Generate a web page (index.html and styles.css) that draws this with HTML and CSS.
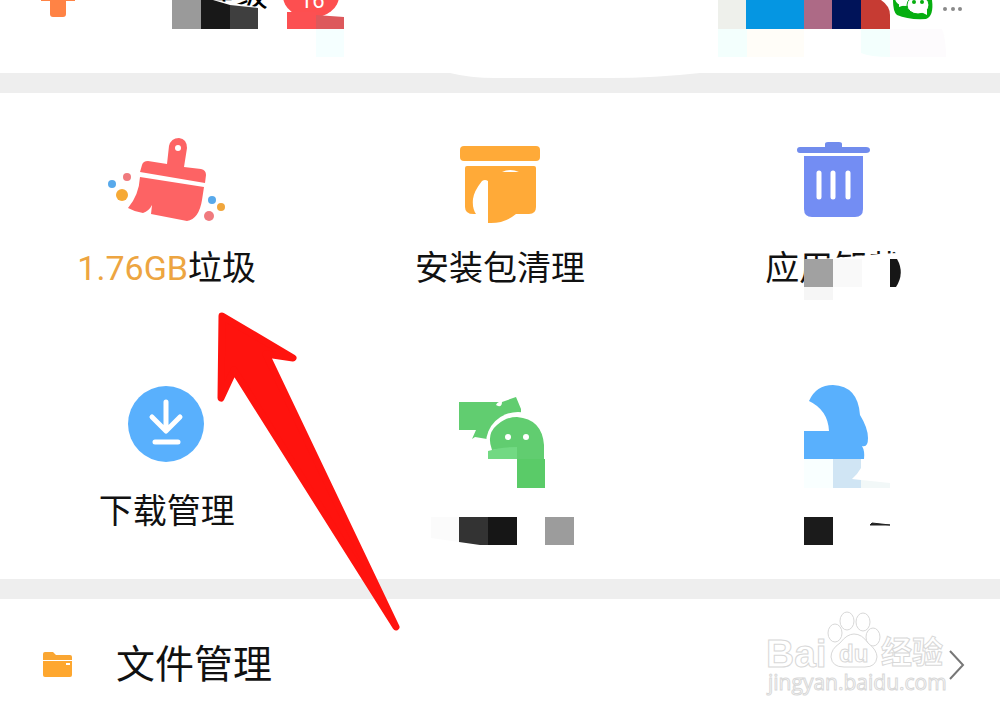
FILE: index.html
```html
<!DOCTYPE html>
<html lang="zh-CN">
<head>
    <meta charset="UTF-8">
    <meta name="viewport" content="width=device-width, initial-scale=1.0">
    <title>文件管理</title>
    <link rel="stylesheet" href="styles.css">
</head>
<body>

    <header class="topo">
        <button class="add" aria-label="添加">
            <svg width="34" height="18" viewBox="0 0 34 18">
                <path d="M0 0h34v1H25v13q0 3-3 3H12q-3 0-3-3V1H0z" fill="#ff8345"/>
            </svg>
        </button>
        <svg class="user" width="100" height="30" viewBox="0 0 100 30">
            <text x="28" y="6" font-size="34">等级</text>
            <path d="M0 0h42L86 7V29H0z" fill="#fff"/>
            <path d="M0 0h29v29H0z" fill="#9a9a9a"/>
            <path d="M29 0h12l17 5v24H29z" fill="#181818"/>
            <path d="M58 5l28 3v21H58z" fill="#3f3f3f"/>
        </svg>
        <svg class="badge" width="64" height="60" viewBox="0 0 64 60">
            <ellipse cx="29" cy="-4" rx="28" ry="22" fill="#fd4f50"/>
            <path d="M5 12h29v17H5z" fill="#fc5052"/>
            <path d="M34 15l28 2v12H34z" fill="#dd595c"/>
            <path d="M34 29h28v28H34z" fill="#f5ffff"/>
            <text x="18" y="8" font-size="22">16</text>
        </svg>

        <svg class="promo" width="229" height="58" viewBox="0 0 229 58">
            <path d="M0 0h29v29H0z" fill="#eef0eb"/>
            <path d="M28 0h58v29H28z" fill="#0596e2"/>
            <path d="M86 0h29v29H86z" fill="#ad6a86"/>
            <path d="M114 0h30v29h-30z" fill="#001359"/>
            <path d="M143 0h20q9 6 9 15v14h-29z" fill="#c63b33"/>
            <path d="M0 29h29v28H0z" fill="#f3fffd"/>
            <path d="M29 29h57v28H29z" fill="#fffdf8"/>
            <path d="M143 29h29v28q-20 0-29-4z" fill="#f3fffd"/>
            <path d="M172 29h52q4 10 4 28h-56z" fill="#fdfbfd"/>
            <path d="M175 0h39q2 16-6 19-18 1-29-4-4-3-4-15z" fill="#06ae10"/>
            <ellipse cx="187" cy="-2" rx="10" ry="8" fill="#fff"/>
            <path d="M181 3v4l6-2z" fill="#fff"/>
            <ellipse cx="200" cy="5" rx="11" ry="9" fill="#fff" stroke="#06ae10"/>
            <path d="M203 12l6 3v-6z" fill="#fff"/>
            <circle cx="196" cy="2" r="2" fill="#06ae10"/>
            <circle cx="204" cy="2" r="2" fill="#06ae10"/>
        </svg>
        <button class="more" aria-label="更多">
            <svg width="20" height="18" viewBox="0 0 20 18" fill="#8a8a8a">
                <circle cx="2" cy="9" r="2"/>
                <circle cx="10" cy="9" r="2"/>
                <circle cx="17" cy="9" r="2"/>
            </svg>
        </button>
    </header>

    <div class="faixa">
        <svg class="curva" width="250" height="5" viewBox="0 0 250 5">
            <path d="M0 0Q20 5 45 5H160Q205 5 250 0z" fill="#fff"/>
        </svg>
    </div>

    <main class="grade">
        <a class="item" href="#">
            <svg width="140" height="120" viewBox="0 0 140 120">
                <g fill="#fd6364">
                    <path d="M70 39l2-18q2-8 10-8 8 1 8 10l-3 19 17 2q5 1 5 6l-1 8-65-11 2-7q1-4 6-4z"/>
                    <path d="M43 52l64 10-2 13q-3 19-15 21l-36-7 1-9q-3 6-9 8-8-1-15-5 11-13 12-31z"/>
                </g>
                <circle cx="81" cy="23" r="3" fill="#fff"/>
                <circle cx="30" cy="52" r="4" fill="#f07a7e"/>
                <circle cx="15" cy="59" r="4" fill="#58a9eb"/>
                <circle cx="25" cy="70" r="6" fill="#f6a935"/>
                <circle cx="115" cy="75" r="4" fill="#58a9eb"/>
                <circle cx="124" cy="82" r="4" fill="#f0a63c"/>
                <circle cx="112" cy="91" r="5" fill="#f07a7e"/>
            </svg>
            <span class="label"><span class="size">1.76GB</span>垃圾</span>
        </a>

        <a class="item" href="#">
            <svg width="140" height="120" viewBox="0 0 140 120">
                <rect x="30" y="21" width="80" height="15" rx="4" fill="#ffaa38"/>
                <path d="M37 41h67q2 0 2 2v39q0 7-7 7H86q-12 10-28 9V56q-3-2-6 0-8 10-9 18-1 9 3 15-11 1-11-7V43q0-2 2-2z" fill="#ffaa38"/>
                <path d="M72 47q8-4 17 0z" fill="#fff"/>
            </svg>
            <span class="label">安装包清理</span>
        </a>

        <a class="item" href="#">
            <svg width="140" height="120" viewBox="0 0 140 120">
                <path d="M62 22v-3q0-2 3-2h11q3 0 3 2v3h24q4 0 4 3t-4 3H37q-3 0-3-3t3-3z" fill="#718ced"/>
                <path d="M41 31h59v53q0 8-8 8H49q-8 0-8-8z" fill="#738df3"/>
                <path d="M56 48v24M70 48v24M85 48v24" stroke="#fff" stroke-width="5" stroke-linecap="round"/>
            </svg>
            <span class="label">应用卸载
                <svg class="mosaico" width="120" height="50" viewBox="0 0 120 50">
                    <path d="M9 10L38 8 64 6 84 4l18-1 5 4h5v31H9z" fill="#fff"/>
                    <path d="M9 9h29v28H9z" fill="#a1a1a1"/>
                    <path d="M38 9h29v28H38z" fill="#f9f9f9"/>
                    <path d="M9 37h29v14H9z" fill="#f6f6f6"/>
                    <path d="M95 9h7q8 14-1 28h-6z" fill="#161616"/>
                </svg>
            </span>
        </a>

        <a class="item" href="#">
            <svg width="140" height="120" viewBox="0 0 140 120">
                <circle cx="69" cy="56" r="38" fill="#59b0fd"/>
                <path d="M69 34v28M55 49l14 14 14-14M58 74h23" fill="none" stroke="#fff" stroke-width="5" stroke-linecap="round" stroke-linejoin="round"/>
            </svg>
            <span class="label">下载管理</span>
        </a>

        <a class="item" href="#" aria-label="微信">
            <svg width="150" height="180" viewBox="0 0 150 180">
                <path d="M34 34h43l14-5 5 12v14L62 71l-12-2-3 2 4-9H34z" fill="#61cd70"/>
                <path d="M71 37q2-4 6-3 0 5-4 4z" fill="#fff"/>
                <ellipse cx="93" cy="75" rx="32" ry="31" fill="#fff"/>
                <path d="M67 82q-6-16 5-25 9-8 20-8 25 2 27 28v14H92V80z" fill="#61cd70"/>
                <path d="M63 83q12-4 29-4v12H63z" fill="#72d983"/>
                <path d="M92 91h28v29H92z" fill="#5acb68"/>
                <circle cx="83" cy="69" r="3" fill="#fff"/>
                <circle cx="101" cy="69" r="3" fill="#fff"/>
                <path d="M6 149h28v25l-28-4z" fill="#fbfbfb"/>
                <path d="M34 149h29v28h-8l-21-3z" fill="#333"/>
                <path d="M63 149h29v28H63z" fill="#161616"/>
                <path d="M120 149h29v28h-29z" fill="#9c9c9c"/>
            </svg>
        </a>

        <a class="item" href="#" aria-label="QQ">
            <svg width="140" height="180" viewBox="0 0 140 180">
                <path d="M46 33q7-16 24-16 25 1 27 30 8 13 8 23 0 10-6 8 3 5 2 13H41V63h25Q65 42 46 33z" fill="#59b0fd"/>
                <path d="M41 91h29v29H41z" fill="#f9ffff"/>
                <path d="M70 91h28v9q-4 7-9 11l9 1v8H70z" fill="#d0e5f4"/>
                <path d="M98 112l29 3v5H98z" fill="#f2f8f8"/>
                <path d="M41 149h29v28H41z" fill="#1b1b1b"/>
                <path d="M107 157l2-2 18 2z" fill="#222" stroke="#222"/>
            </svg>
        </a>
    </main>

    <div class="faixa"></div>

    <a class="linha" href="#">
        <svg width="30" height="26" viewBox="0 0 30 26">
            <path d="M0 2q0-2 2-2h8l3 3h14q2 0 2 2v3H0z" fill="#faa632"/>
            <path d="M0 9h29v14q0 2-2 2H2q-2 0-2-2z" fill="#fea72f"/>
            <path d="M23 11h4v2h-4z" fill="#fff"/>
        </svg>
        <span class="titulo">文件管理</span>
        <svg class="seta" width="18" height="32" viewBox="0 0 18 32">
            <path d="M2 2l13 14L2 30" fill="none" stroke="#777" stroke-width="2"/>
        </svg>
    </a>

    <!-- marca d'água -->
    <svg class="marca" width="190" height="96" viewBox="0 0 190 96">
        <g class="contorno">
            <ellipse cx="70" cy="25" rx="7" ry="9"/>
            <ellipse cx="82" cy="13" rx="7" ry="9"/>
            <ellipse cx="98" cy="14" rx="7" ry="9"/>
            <ellipse cx="108" cy="29" rx="7" ry="9"/>
            <path d="M75 35Q82 26 89 26q8 0 14 9 9 7 9 14-1 10-12 10H79q-12 0-13-10 0-8 9-14z"/>
            <text class="bai" x="1" y="59">Bai</text>
            <text class="du" x="74" y="54">du</text>
            <text class="jy" x="116" y="55">经验</text>
            <text class="site" x="3" y="82">jingyan.baidu.com</text>
        </g>
    </svg>

    <svg class="flecha" width="200" height="330" viewBox="0 0 200 330">
        <path d="M13 11L84 53 57 49 187 322 25 65 12 93z" fill="#ff130e" stroke="#ff130e" stroke-width="7" stroke-linejoin="round"/>
    </svg>

</body>
</html>
```
FILE: styles.css
```css
body {
    font-family: Roboto, "Noto Sans CJK SC", sans-serif;
    margin: 0;
    padding: 0;
    background-color: #fff;
    color: #111;
    position: relative;
    overflow-x: hidden;
}
svg {
    display: block;
    flex: none;
}
button {
    background: none;
    border: none;
    padding: 0;
    cursor: pointer;
}
a {
    color: inherit;
    text-decoration: none;
}
.topo {
    display: flex;
    align-items: flex-start;
    height: 73px;
    padding: 0 37px 0 41px;
}
.user {
    margin-left: 97px;
}
.badge {
    margin-left: 10px;
}
.badge text {
    fill: #fff;
}
.promo {
    margin-left: auto;
}
.more {
    margin-left: -4px;
}
.faixa {
    height: 20px;
    background-color: #eee;
}
.curva {
    margin: 0 auto;
    position: relative;
    left: 75px;
}
.grade {
    display: grid;
    grid-template-columns: repeat(3, 1fr);
    grid-auto-rows: 243px;
}
.item,
.linha {
    box-sizing: border-box;
}
.item {
    display: flex;
    flex-direction: column;
    align-items: center;
    padding-top: 32px;
}
.label {
    position: relative;
    font-size: 34px;
    line-height: 46px;
    white-space: nowrap;
}
.size {
    color: #eda541;
}
/* cobre parte do texto */
.mosaico {
    position: absolute;
    top: 5px;
    left: 30px;
}
.linha {
    display: flex;
    align-items: center;
    min-height: 119px;
    padding: 13px 34px 0 43px;
}
.titulo {
    margin-left: 43px;
    font-size: 39px;
    line-height: 46px;
}
.seta {
    margin-left: auto;
}
.marca {
    position: absolute;
    right: 45px;
    bottom: 14px;
}
.contorno {
    fill: #fff;
    stroke: #d8d8d8;
    stroke-width: 1px;
}
.bai {
    font: bold 39px "Liberation Sans", sans-serif;
}
.du {
    font: bold 24px "Liberation Sans", sans-serif;
}
.jy {
    font: bold 31px "Noto Sans CJK SC", sans-serif;
}
.site {
    font: 21px "Open Sans", sans-serif;
}
.flecha {
    position: absolute;
    top: 305px;
    left: 209px;
}
```
